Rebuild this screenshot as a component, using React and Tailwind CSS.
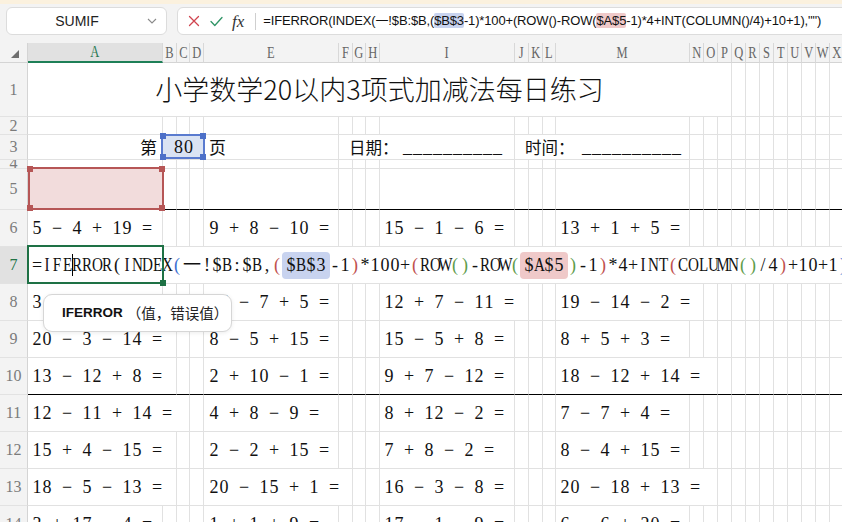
import React from 'react';

const COLS = [
  { k: 'A', w: 'w-[135px]', px: 135 }, { k: 'B', w: 'w-[14px]', px: 14 }, { k: 'C', w: 'w-[13px]', px: 13 }, { k: 'D', w: 'w-[14px]', px: 14 },
  { k: 'E', w: 'w-[135px]', px: 135 }, { k: 'F', w: 'w-[14px]', px: 14 }, { k: 'G', w: 'w-[13px]', px: 13 }, { k: 'H', w: 'w-[14px]', px: 14 },
  { k: 'I', w: 'w-[135px]', px: 135 }, { k: 'J', w: 'w-[14px]', px: 14 }, { k: 'K', w: 'w-[14px]', px: 14 }, { k: 'L', w: 'w-[13px]', px: 13 },
  { k: 'M', w: 'w-[134px]', px: 134 }, { k: 'N', w: 'w-[14px]', px: 14 }, { k: 'O', w: 'w-[14px]', px: 14 }, { k: 'P', w: 'w-[14px]', px: 14 },
  { k: 'Q', w: 'w-[14px]', px: 14 }, { k: 'R', w: 'w-[14px]', px: 14 }, { k: 'S', w: 'w-[14px]', px: 14 }, { k: 'T', w: 'w-[14px]', px: 14 },
  { k: 'U', w: 'w-[14px]', px: 14 }, { k: 'V', w: 'w-[14px]', px: 14 }, { k: 'W', w: 'w-[14px]', px: 14 }, { k: 'X', w: 'w-[14px]', px: 14 },
];

const COL_X = [];
{
  let x = 28;
  for (const c of COLS) {
    COL_X.push(x);
    x += c.px;
  }
}

const SERIF = "font-['Liberation_Serif','Noto_Sans_CJK_SC',serif]";
const CJK = "font-['Noto_Sans_CJK_SC',sans-serif]";
const SANS = "font-['Liberation_Sans','Noto_Sans_CJK_SC',sans-serif]";

const isFull = (ch) => /[\u3000-\u9fff\uff00-\uffef]/.test(ch);
const slotLen = (t) => Array.from(t).reduce((a, ch) => a + (isFull(ch) ? 2 : 1), 0);

function Slots({ text }) {
  return Array.from(text).map((ch, i) => {
    const full = isFull(ch);
    const cap = /[A-Z]/.test(ch);
    return (
      <span key={i} className={`flex justify-center shrink-0 ${full ? 'w-[20px]' : 'w-[10px]'}`}>
        {cap ? <span className="inline-block scale-x-[0.84]">{ch}</span> : ch}
      </span>
    );
  });
}

function RowHead({ n, active }) {
  return (
    <div
      className={`w-[28px] shrink-0 h-full flex items-center justify-center overflow-hidden border-r border-r-[#d4d4d4] border-b border-b-[#e2e2e2] ${SERIF} text-[16px] ${
        active ? 'bg-[#e1e1e1] text-[#217346]' : 'bg-[#f3f3f3] text-[#7b7b7b]'
      }`}
    >
      {n}
    </div>
  );
}

function Cell({ i, hideR, bottom, className = '', children }) {
  return (
    <div
      className={`${COLS[i].w} shrink-0 h-full flex items-center border-b ${bottom ? 'border-b-black' : 'border-b-[#e1e1e1]'} ${
        hideR ? '' : 'border-r border-r-[#e1e1e1]'
      } ${className}`}
    >
      {children}
    </div>
  );
}

const PAD = { 0: 4, 4: 5, 8: 4, 12: 4 };
const PADCLS = { 0: 'pl-[4px]', 4: 'pl-[5px]', 8: 'pl-[4px]', 12: 'pl-[4px]' };

function ExprRow({ n, cells, bottom }) {
  const hidden = new Set();
  Object.keys(cells).forEach((k) => {
    const i = Number(k);
    const end = COL_X[i] + PAD[i] + slotLen(cells[k]) * 10 + 6;
    let j = i;
    while (j < COLS.length && COL_X[j] + COLS[j].px < end) {
      hidden.add(j);
      j++;
    }
  });
  return (
    <div className="flex h-[37px] shrink-0">
      <RowHead n={n} />
      {COLS.map((c, i) => (
        <Cell key={i} i={i} hideR={hidden.has(i)} bottom={bottom} className={cells[i] ? PADCLS[i] : ''}>
          {cells[i] && (
            <span className={`flex shrink-0 whitespace-nowrap text-[18px] text-[#111] ${SERIF}`}>
              <Slots text={cells[i]} />
            </span>
          )}
        </Cell>
      ))}
    </div>
  );
}

function Handle({ pos, color }) {
  const p = {
    tl: '-left-[3px] -top-[3px]',
    tr: '-right-[3px] -top-[3px]',
    bl: '-left-[3px] -bottom-[3px]',
    br: '-right-[3px] -bottom-[3px]',
  }[pos];
  return <span className={`absolute w-[6px] h-[6px] ${color} ${p}`} />;
}

const F_TOKENS = [
  ['=IFERROR(INDEX', ''],
  ['(', 'text-[#3b6fd1]'],
  ['一!$B:$B,', ''],
  ['(', 'text-[#c0504d]'],
  ['$B$3', '', 'blue'],
  ['-1', ''],
  [')', 'text-[#c0504d]'],
  ['*100+', ''],
  ['(', 'text-[#c0504d]'],
  ['ROW', ''],
  ['()', 'text-[#5e9c4a]'],
  ['-ROW', ''],
  ['(', 'text-[#5e9c4a]'],
  ['$A$5', '', 'red'],
  [')', 'text-[#5e9c4a]'],
  ['-1', ''],
  [')', 'text-[#c0504d]'],
  ['*4+INT', ''],
  ['(', 'text-[#c0504d]'],
  ['COLUMN', ''],
  ['()', 'text-[#5e9c4a]'],
  ['/4', ''],
  [')', 'text-[#c0504d]'],
  ['+10+1', ''],
  [')', 'text-[#3b6fd1]'],
  [',"")', ''],
];

function EditRow() {
  return (
    <div className="flex h-[37px] shrink-0">
      <RowHead n={7} active />
      <div className="relative flex-1 h-full bg-white border-b border-b-[#e1e1e1] flex items-center pl-[4px] overflow-visible">
        <div className={`flex items-center whitespace-nowrap text-[18px] text-[#111] ${SERIF}`}>
          {F_TOKENS.map(([t, c, hl], k) => {
            if (hl) {
              return (
                <span
                  key={k}
                  className={`flex px-[4px] rounded-[4px] ${hl === 'blue' ? 'bg-[#c8d3ef]' : 'bg-[#efc9c9]'}`}
                >
                  <Slots text={t} />
                </span>
              );
            }
            if (k === 0) {
              return (
                <span key={k} className="flex items-center">
                  <Slots text="=IFE" />
                  <span className="w-px h-[22px] bg-black -mr-px" />
                  <Slots text="RROR(INDEX" />
                </span>
              );
            }
            return (
              <span key={k} className={`flex ${c}`}>
                <Slots text={t} />
              </span>
            );
          })}
        </div>
        <div className="absolute -left-[1px] -top-[2px] w-[137px] h-[39px] border-2 border-[#1e7145] pointer-events-none">
          <span className="absolute -right-[4px] -bottom-[4px] w-[6px] h-[6px] bg-[#1e7145]" />
        </div>
      </div>
    </div>
  );
}

function FormulaBarText() {
  return (
    <div className={`whitespace-nowrap text-[13px] tracking-[-0.15px] text-[#111] ${SANS}`}>
      =IFERROR(INDEX(一!$B:$B,(
      <span className="bg-[#c8d3ef] rounded-[2px]">$B$3</span>
      -1)*100+(ROW()-ROW(
      <span className="bg-[#efc9c9] rounded-[2px]">$A$5</span>
      -1)*4+INT(COLUMN()/4)+10+1),"")
    </div>
  );
}

export default function App() {
  const rows = [
    { n: 6, c: { 0: '5 − 4 + 19 =', 4: '9 + 8 − 10 =', 8: '15 − 1 − 6 =', 12: '13 + 1 + 5 =' } },
    { n: 7, edit: true },
    { n: 8, c: { 0: '3 + 16 − 9 =', 4: '16 − 7 + 5 =', 8: '12 + 7 − 11 =', 12: '19 − 14 − 2 =' } },
    { n: 9, c: { 0: '20 − 3 − 14 =', 4: '8 − 5 + 15 =', 8: '15 − 5 + 8 =', 12: '8 + 5 + 3 =' } },
    { n: 10, c: { 0: '13 − 12 + 8 =', 4: '2 + 10 − 1 =', 8: '9 + 7 − 12 =', 12: '18 − 12 + 14 =' }, bottom: true },
    { n: 11, c: { 0: '12 − 11 + 14 =', 4: '4 + 8 − 9 =', 8: '8 + 12 − 2 =', 12: '7 − 7 + 4 =' } },
    { n: 12, c: { 0: '15 + 4 − 15 =', 4: '2 − 2 + 15 =', 8: '7 + 8 − 2 =', 12: '8 − 4 + 15 =' } },
    { n: 13, c: { 0: '18 − 5 − 13 =', 4: '20 − 15 + 1 =', 8: '16 − 3 − 8 =', 12: '20 − 18 + 13 =' } },
    { n: 14, c: { 0: '3 + 17 − 4 =', 4: '1 + 1 + 9 =', 8: '17 − 1 − 9 =', 12: '6 − 6 + 20 =' } },
  ];

  return (
    <div className="relative w-[842px] h-[522px] overflow-hidden bg-white">
      {/* toolbar */}
      <div className="h-[4px] bg-[#fbf1de]" />
      <div className="h-[39px] bg-[#f3f3f3] flex items-start pt-[3px] pl-[6px] gap-[10px] overflow-hidden">
        <div className="w-[161px] h-[28px] shrink-0 bg-white border border-[#dcdcdc] rounded-[6px] flex items-center">
          <span className={`flex-1 text-center text-[14px] text-[#222] ${SANS}`}>SUMIF</span>
          <svg width="10" height="6" viewBox="0 0 10 6" className="mr-[9px]">
            <path d="M1 1 L5 5 L9 1" fill="none" stroke="#8a8a8a" strokeWidth="1.1" />
          </svg>
        </div>
        <div className="w-[700px] h-[28px] shrink-0 bg-white border border-[#dcdcdc] rounded-[6px] flex items-center">
          <svg width="12" height="12" viewBox="0 0 12 12" className="ml-[10px]">
            <path d="M1.5 1.5 L10.5 10.5 M10.5 1.5 L1.5 10.5" stroke="#d0444f" strokeWidth="1.3" strokeLinecap="round" />
          </svg>
          <svg width="13" height="11" viewBox="0 0 13 11" className="ml-[10px]">
            <path d="M1 5.5 L4.8 9.5 L12 1.5" fill="none" stroke="#2f9466" strokeWidth="1.3" strokeLinecap="round" strokeLinejoin="round" />
          </svg>
          <span className={`ml-[9px] italic text-[17px] text-[#333] leading-none ${"font-['Liberation_Serif',serif]"}`}>fx</span>
          <span className="ml-[11px] w-px h-[17px] bg-[#cfcfcf]" />
          <span className="ml-[7px]">
            <FormulaBarText />
          </span>
        </div>
      </div>

      {/* column header */}
      <div className="flex h-[20px]">
        <div className="w-[28px] shrink-0 h-full bg-[#f3f3f3] border-r border-r-[#d4d4d4] border-b border-b-[#d4d4d4] flex items-center justify-center">
          <svg width="8" height="8" viewBox="0 0 8 8" className="mt-[3px] ml-[2px]">
            <path d="M8 0 L8 8 L0 8 Z" fill="#6f6f6f" />
          </svg>
        </div>
        {COLS.map((c, i) => (
          <div
            key={c.k}
            className={`${c.w} shrink-0 h-full flex items-center justify-center overflow-hidden border-r border-r-[#d8d8d8] ${SERIF} text-[16px] ${
              i === 0
                ? 'bg-[#e1e1e1] text-[#2a7a55] border-b-2 border-b-[#1e7f57]'
                : 'bg-[#f3f3f3] text-[#666] border-b border-b-[#d4d4d4]'
            }`}
          >
            <span className="inline-block scale-x-[0.78]">{c.k}</span>
          </div>
        ))}
      </div>

      {/* row 1 */}
      <div className="flex h-[54px]">
        <RowHead n={1} />
        <div className={`w-[704px] shrink-0 h-full flex items-center justify-center border-r border-r-[#e1e1e1] border-b border-b-[#e1e1e1] ${CJK} font-light text-[27px] text-[#111]`}>
          小学数学20以内3项式加减法每日练习
        </div>
        {COLS.slice(16).map((c, j) => (
          <Cell key={j} i={16 + j} />
        ))}
      </div>

      {/* row 2 */}
      <div className="flex h-[18px]">
        <RowHead n={2} />
        {COLS.map((c, i) => (
          <Cell key={i} i={i} />
        ))}
      </div>

      {/* row 3 */}
      <div className="flex h-[25px]">
        <RowHead n={3} />
        <Cell i={0} className={`justify-end pr-[5px] ${CJK} text-[17px] text-[#111]`}>第</Cell>
        <div className="relative w-[41px] shrink-0 h-full bg-[#dae3f3] border-b border-b-[#e1e1e1] flex items-center justify-center">
          <span className={`flex text-[18px] text-[#111] ${SERIF}`}>
            <Slots text="80" />
          </span>
          <div className="absolute -left-[2px] -top-[1px] -right-[1px] -bottom-[0px] border-2 border-[#5a7bcf]">
            <Handle pos="tl" color="bg-[#4d70c8]" />
            <Handle pos="tr" color="bg-[#4d70c8]" />
            <Handle pos="bl" color="bg-[#4d70c8]" />
            <Handle pos="br" color="bg-[#4d70c8]" />
          </div>
        </div>
        <Cell i={4} className={`pl-[5px] ${CJK} text-[17px] text-[#111]`}>页</Cell>
        <Cell i={5} hideR className="pl-[10px]">
          <span className={`flex items-center shrink-0 whitespace-nowrap text-[16.5px] text-[#111] ${CJK}`}>
            日期：
            <span className={`flex ml-[4px] text-[18px] ${SERIF}`}>
              <Slots text="__________" />
            </span>
          </span>
        </Cell>
        <Cell i={6} hideR />
        <Cell i={7} hideR />
        <Cell i={8} />
        <Cell i={9} hideR className="pl-[10px]">
          <span className={`flex items-center shrink-0 whitespace-nowrap text-[16.5px] text-[#111] ${CJK}`}>
            时间：
            <span className={`flex ml-[7px] text-[18px] ${SERIF}`}>
              <Slots text="__________" />
            </span>
          </span>
        </Cell>
        <Cell i={10} hideR />
        <Cell i={11} hideR />
        {COLS.slice(12).map((c, j) => (
          <Cell key={j} i={12 + j} />
        ))}
      </div>

      {/* row 4 */}
      <div className="flex h-[9px]">
        <RowHead n={4} />
        {COLS.map((c, i) => (
          <Cell key={i} i={i} />
        ))}
      </div>

      {/* row 5 */}
      <div className="flex h-[41px]">
        <RowHead n={5} />
        <div className="relative w-[135px] shrink-0 h-full bg-[#f2dcdc] border-b border-b-black">
          <div className="absolute -left-[0px] -top-[2px] -right-[1px] -bottom-[1px] border-2 border-[#b65656]">
            <Handle pos="tl" color="bg-[#b65656]" />
            <Handle pos="tr" color="bg-[#b65656]" />
            <Handle pos="bl" color="bg-[#b65656]" />
            <Handle pos="br" color="bg-[#b65656]" />
          </div>
        </div>
        {COLS.slice(1).map((c, j) => (
          <Cell key={j} i={1 + j} bottom />
        ))}
      </div>

      {rows.map((r) => (r.edit ? <EditRow key={r.n} /> : <ExprRow key={r.n} n={r.n} cells={r.c} bottom={r.bottom} />))}

      {/* function tooltip */}
      <div className="absolute left-[43px] top-[294px] w-[189px] h-[38px] bg-white border border-[#d6d6d6] rounded-[9px] shadow-[0_1px_4px_rgba(0,0,0,0.08)] flex items-center pl-[18px]">
        <span className={`font-bold text-[13.5px] text-[#111] ${SANS}`}>IFERROR</span>
        <span className={`ml-[4px] text-[14.5px] text-[#222] ${CJK}`}>（值，错误值）</span>
      </div>
    </div>
  );
}
